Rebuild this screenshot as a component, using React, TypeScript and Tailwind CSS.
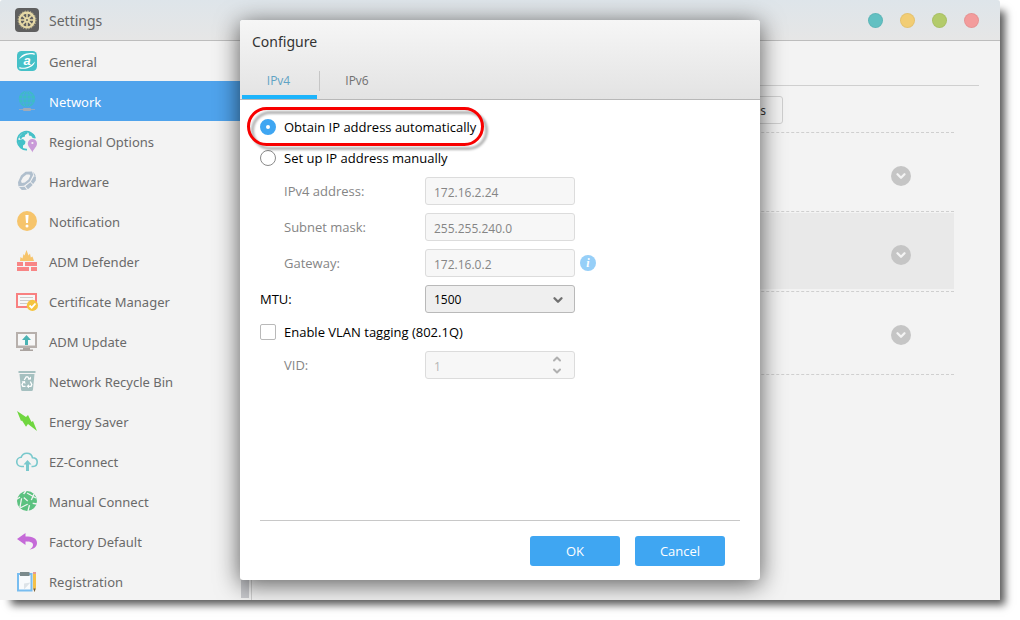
import { useState } from "react";
import type { ReactNode } from "react";
import { ChevronDown, ChevronUp } from "lucide-react";

const Icon = ({ children }: { children: ReactNode }) => (
  <svg viewBox="0 0 24 24" className="size-6 shrink-0" fill="none" aria-hidden="true">
    {children}
  </svg>
);

const SettingsIcon = () => (
  <Icon>
    <rect width="24" height="24" rx="4" fill="#5f5f5f" />
    <circle cx="12" cy="12" r="7.4" stroke="#e6d9a6" strokeWidth="2.2" />
    <circle cx="12" cy="12" r="8.9" stroke="#e6d9a6" strokeWidth="0.8" strokeDasharray="1.4 1.4" />
    <path
      d="M12 5v14M5 12h14M7.1 7.1l9.8 9.8M16.9 7.1l-9.8 9.8"
      stroke="#e6d9a6"
      strokeWidth="1.5"
    />
    <circle cx="12" cy="12" r="2.8" fill="#e6d9a6" />
    <circle cx="12" cy="12" r="1" fill="#5f5f5f" />
  </Icon>
);

const items = [
  {
    name: "General",
    icon: (
      <Icon>
        <rect x="2" y="2" width="20" height="20" rx="4.5" fill="#45c1c8" />
        <path d="M4.2 10.5C5.5 6 12 2.8 19.8 4.6L19.5 6C18 4.800 11 4.200 4.200 10.500z" fill="#fff" />
        <path d="M20 12.500C19 17.500 12 21.200 4.200 19.400L4.500 18C7 19.600 14.500 19.200 20 12.500z" fill="#fff" />
        <text
          x="12"
          y="16"
          textAnchor="middle"
          fontSize="13"
          fontWeight="bold"
          fontStyle="italic"
          fill="#fff"
          fontFamily="Liberation Sans"
        >
          a
        </text>
      </Icon>
    ),
  },
  {
    name: "Network",
    icon: (
      <Icon>
        <circle cx="12" cy="10" r="8.2" fill="#3dbcc4" />
        <g stroke="#4fa3ec" strokeWidth="0.8">
          <path d="M12 2v16M4 10h16M5.500 6h13M5.500 14h13" />
          <ellipse cx="12" cy="10" rx="4.300" ry="8.200" />
        </g>
        <path d="M4 20.500h16" stroke="#8fa9c4" />
        <rect x="8" y="19" width="8" height="3" rx="1" fill="#a2aab6" />
      </Icon>
    ),
  },
  {
    name: "Regional Options",
    icon: (
      <Icon>
        <path d="M12 20.600A9 9 0 1 1 20 9" stroke="#45c1c8" strokeWidth="1.600" />
        <path d="M4 8l3.500-4L12 2.500l.5 2-2.500 1.500 0 1.500-3 1-1 2.500z" fill="#45c1c8" />
        <path d="M2.500 10.500l2.500.5 3-1 2.500 2.500-.5 2.500-2 1.500v3.500l-4-3z" fill="#45c1c8" />
        <path d="M13.500 3l5 2 2.200 4.500-3-.5-1.500-2-2.200-.5z" fill="#45c1c8" />
        <path
          d="M17.400 23.500c-.8-3-4.600-5.500-4.600-8.900a4.600 4.600 0 0 1 9.200 0c0 3.400-3.800 5.900-4.600 8.900z"
          fill="#c99ad8"
        />
        <circle cx="17.400" cy="14" r="1.100" fill="#f3f3f3" />
      </Icon>
    ),
  },
  {
    name: "Hardware",
    icon: (
      <Icon>
        <path
          fillRule="evenodd"
          d="M10.500 2.800L17 2.600l1.200 3.200-3.200 6.400L9 16.800l-5.600.4L3 13.200l3-6.700zM11.500 5.400L8 8.200 6 12l.8 2 3-.4 3.700-3 1.800-3.800-.9-1.400z"
          fill="#b0bfcd"
        />
        <path
          d="M18.200 2.800l2.700 4-1.800 0zM19 7.300l2 .2-.2 4-2.600 3.600-2.400-2.400zM15.300 13.200l2.400 2.800-4.700 4.300-2.600-3zM9.600 17.800l2.300 3-5.100.3-2.800-3z"
          fill="#b0bfcd"
        />
      </Icon>
    ),
  },
  {
    name: "Notification",
    icon: (
      <Icon>
        <circle cx="12" cy="12" r="10" fill="#f6c46b" />
        <path d="M10.400 6h3.200l-.6 8h-2z" fill="#fff" />
        <circle cx="12" cy="17" r="1.500" fill="#fff" />
      </Icon>
    ),
  },
  {
    name: "ADM Defender",
    icon: (
      <Icon>
        <path d="M5 12l.5-4 2 1.500 1-4.500 1 1.500L11.500 1l2 5.500 1.500-2 .8 4 1.700-1L19 12z" fill="#f6c46b" />
        <path d="M2 13h6v4H2zM10 13h12v4H10zM2 18h12v4H2zM16 18h6v4h-6z" fill="#f88585" />
      </Icon>
    ),
  },
  {
    name: "Certificate Manager",
    icon: (
      <Icon>
        <rect x="2" y="5" width="19" height="13" fill="#f7f7f7" stroke="#f88080" strokeWidth="2" />
        <path d="M5 8.500h13M5 11.500h13M5 14.500h7" stroke="#ccc" />
        <circle cx="17.400" cy="16.400" r="5.600" fill="#f5c440" />
        <path d="M14.500 16.500l2.200 2.200 3.800-4.200" stroke="#fff" strokeWidth="1.800" />
      </Icon>
    ),
  },
  {
    name: "ADM Update",
    icon: (
      <Icon>
        <rect x="2" y="4" width="19" height="14" fill="#f7f7f7" stroke="#b7b0ac" strokeWidth="2" />
        <path d="M2 17.500h19" stroke="#b7b0ac" strokeWidth="2" />
        <path d="M11.500 6l4.500 5h-3v5h-3v-5H7z" fill="#4bb3b3" />
        <path d="M8 19h7v1.500H8zM5 20.500h13V22H5z" fill="#aaa39f" />
      </Icon>
    ),
  },
  {
    name: "Network Recycle Bin",
    icon: (
      <Icon>
        <path
          d="M3.500 2h17v2h-17zM4.500 5h15L18 20.500q-.2 1.500-1.500 1.500h-9Q6.200 22 6 20.500z"
          fill="#a5c0c0"
        />
        <path
          d="M9.200 11l2-3.200h1.600l1.500 2.700M15.300 12.500l1.500 3-.8 1.800h-3M10.500 17.300H7.800L7 15.500l1.400-2.600"
          stroke="#fff"
          strokeWidth="1.300"
        />
        <path d="M12.600 10.500H16V7.500zM14 15.200v4l-2.500-2zM6.500 12.500l3.500-.5.500 3z" fill="#fff" />
      </Icon>
    ),
  },
  {
    name: "Energy Saver",
    icon: (
      <Icon>
        <path d="M2 2l9 6 2-2 3.500 7 1.500-1 4 10-9-7-2 2.800L7 11.500l-1 .5z" fill="#6fd63f" />
      </Icon>
    ),
  },
  {
    name: "EZ-Connect",
    icon: (
      <Icon>
        <path
          d="M9 17.500H6.500a4.600 4.600 0 0 1-.3-9.200C7 5.500 9 4.200 11.800 4.200c3 0 5.200 1.800 5.700 4.600 3 0 4.700 2 4.700 4.300 0 2.500-1.700 4.400-4.200 4.400h-1.500"
          stroke="#78c8cc"
          strokeWidth="1.600"
        />
        <path d="M12.500 11l4 4.500H14V22h-3v-6.500H8.500z" fill="#78c8cc" />
      </Icon>
    ),
  },
  {
    name: "Manual Connect",
    icon: (
      <Icon>
        <circle cx="12" cy="12" r="10" fill="#5cc280" />
        <path
          d="M2 10l5-3 8 7 7 1M7 7l4-5M15 14l-2 8M15 14l4-9M15 14L5 19M7 7L5 18M12 4l9 5"
          stroke="#f3f3f3"
          strokeWidth="1.300"
        />
        <circle cx="7" cy="7" r="2.400" fill="#5cc280" />
        <circle cx="15" cy="13.500" r="2.800" fill="#5cc280" />
      </Icon>
    ),
  },
  {
    name: "Factory Default",
    icon: (
      <Icon>
        <path
          d="M2 10l8.500-6v3.500c7 0 11.500 1.500 11.500 6.500 0 3.500-3 6-7.500 6.500 2.500-1.300 3.700-3 3.500-5-.3-2.200-3-3-7.500-3V16z"
          fill="#c56ad8"
        />
      </Icon>
    ),
  },
  {
    name: "Registration",
    icon: (
      <Icon>
        <rect x="3" y="5" width="13.500" height="16.500" fill="#f8fafc" stroke="#78bdf0" strokeWidth="2" />
        <path d="M9 20.500v-6l6.500-1z" fill="#dde3e8" />
        <rect x="5" y="3" width="9.500" height="4" fill="#7b8a8c" />
        <path d="M18 5h3v14l-1.500 4-1.500-4z" fill="#f3c04a" />
        <path d="M18 3h3v2h-3z" fill="#e89a93" />
        <path d="M18.300 19.500h2.400l-1.200 3.500z" fill="#6b5a4a" />
      </Icon>
    ),
  },
];

const dots = [
  { name: "Help", color: "bg-[#62c0c2]" },
  { name: "Minimize", color: "bg-[#f2cd74]" },
  { name: "Maximize", color: "bg-[#b3cb6b]" },
  { name: "Close", color: "bg-[#f39c9c]" },
];

const addressFields = [
  { id: "ipv4", label: "IPv4 address:", value: "172.16.2.24" },
  { id: "subnet", label: "Subnet mask:", value: "255.255.240.0" },
  { id: "gateway", label: "Gateway:", value: "172.16.0.2" },
];

const radioClass =
  "size-4 shrink-0 appearance-none rounded-full border border-[#8a8a8a] bg-white checked:border-[6px] checked:border-[#3fa6f2]";
const fieldClass =
  "h-7 w-[150px] rounded-[3px] border border-[#dcdcdc] bg-[#f7f7f7] px-2 pt-0.5 text-xs";

const ExpandButton = () => (
  <button
    aria-label="Expand"
    className="flex size-5 items-center justify-center rounded-full bg-[#c5c5c5] text-[#f3f3f3]"
  >
    <ChevronDown className="size-3.5" strokeWidth={4} />
  </button>
);

const Sidebar = () => (
  <nav className="w-60 shrink-0">
    {items.map((item) => (
      <a
        key={item.name}
        href="#"
        className={
          item.name === "Network"
            ? "flex h-10 items-center gap-2.5 bg-[#4fa3ec] pl-[15px] text-white"
            : "flex h-10 items-center gap-2.5 pl-[15px] text-[#6a6a6a]"
        }
      >
        {item.icon}
        <span className="pt-1">{item.name}</span>
      </a>
    ))}
  </nav>
);

const Main = () => (
  <main className="min-w-0 flex-1 border-l border-[#cfcfcf] pr-[21px] pl-5">
    <div className="h-[45px] border-b border-[#cfcfcf]" />
    <div className="mr-[25px]">
      <div className="flex h-[47px] justify-end border-b border-dashed border-[#cfcfcf] pt-2.5 pr-[171px]">
        <button className="h-7 w-28 rounded-[3px] border border-[#cfcfcf] pt-0.5 pr-4 text-right text-xs text-[#333]">
          s
        </button>
      </div>
      <div className="flex h-[79px] items-center justify-end border-b border-dashed border-[#cfcfcf] pt-2 pr-[43px]">
        <ExpandButton />
      </div>
      <div className="border-b border-dashed border-[#cfcfcf] pt-px pb-0.5">
        <div className="flex h-[76px] items-center justify-end bg-[#e9e9e9] pt-2 pr-[43px]">
          <ExpandButton />
        </div>
      </div>
      <div className="flex h-[83px] items-center justify-end border-b border-dashed border-[#cfcfcf] pt-1 pr-[43px]">
        <ExpandButton />
      </div>
    </div>
  </main>
);

const ConfigureDialog = () => {
  const [tab, setTab] = useState("IPv4");
  const [mode, setMode] = useState("auto");
  const [vlan, setVlan] = useState(false);
  const manual = mode === "manual";

  return (
    <div
      role="dialog"
      aria-labelledby="dialog-title"
      className="flex w-[520px] flex-col rounded-[3px] bg-white font-['Open_Sans',sans-serif] text-[13px] text-black shadow-[0_4px_24px_rgba(0,0,0,0.65)]"
    >
      {/* Title and tabs */}
      <div className="flex h-20 flex-col justify-between rounded-t-[3px] border-b border-[#b8b8b8] bg-linear-to-b from-[#f6f6f6] to-[#e3e3e3]">
        <h2 id="dialog-title" className="pt-3 pl-3 font-['Noto_Sans',sans-serif] text-sm text-[#333]">
          Configure
        </h2>
        <div role="tablist" className="flex items-center px-0.5 text-xs text-[#707070]">
          {["IPv4", "IPv6"].map((name) => (
            <button
              key={name}
              role="tab"
              aria-selected={tab === name}
              onClick={() => setTab(name)}
              className="group flex w-[78px] flex-col aria-selected:text-[#5fa3c4]"
            >
              <span className="mb-1 flex h-5 w-full items-center justify-center border-[#c6c6c6] pr-1 group-first:border-r">
                {name}
              </span>
              <span className="h-1 w-[75px] group-aria-selected:bg-[#1db4fb]" />
            </button>
          ))}
        </div>
      </div>

      <form className="flex flex-1 flex-col px-5 pt-[11px] pb-3.5" onSubmit={(e) => e.preventDefault()}>
        <div className="relative flex h-[31px] items-center">
          <label className="flex items-center gap-2">
            <input
              type="radio"
              name="mode"
              className={radioClass}
              checked={!manual}
              onChange={() => setMode("auto")}
            />
            <span className="pt-0.5">Obtain IP address automatically</span>
          </label>
          {/* Callout around the selected option */}
          <div className="pointer-events-none absolute -top-1 -left-[13px] h-[39px] w-[237px] rounded-[22px] border-[3px] border-[#f80000] drop-shadow-[4px_4px_1px_rgba(0,0,0,0.3)]" />
        </div>
        <label className="flex h-[31px] items-center gap-2">
          <input
            type="radio"
            name="mode"
            className={radioClass}
            checked={manual}
            onChange={() => setMode("manual")}
          />
          <span className="pt-0.5">Set up IP address manually</span>
        </label>

        <div className="mt-1 flex flex-col gap-2">
          {addressFields.map((field) => (
            <div key={field.id} className="flex items-center">
              <label htmlFor={field.id} className="w-[165px] pt-0.5 pl-6 text-[#858585]">
                {field.label}
              </label>
              <input
                id={field.id}
                defaultValue={field.value}
                disabled={!manual}
                className={`${fieldClass} text-[#858585]`}
              />
              {field.id === "gateway" && (
                <button
                  type="button"
                  aria-label="Info"
                  className="ml-[5px] size-4 rounded-full bg-[#96cff8] font-['Liberation_Serif',serif] text-xs leading-4 font-bold text-white italic"
                >
                  i
                </button>
              )}
            </div>
          ))}
          <div className="flex items-center">
            <label htmlFor="mtu" className="w-[165px] pt-0.5">
              MTU:
            </label>
            <div className="relative">
              <select
                id="mtu"
                className="h-7 w-[150px] appearance-none rounded-[3px] border border-[#b9b9b9] bg-[#efefef] px-2 pt-0.5 text-xs"
              >
                <option>1500</option>
              </select>
              <ChevronDown
                className="pointer-events-none absolute top-2 right-2.5 size-3.5 text-[#707070]"
                strokeWidth={4}
              />
            </div>
          </div>
        </div>

        <label className="mt-0.5 mb-0.5 flex h-[34px] items-center gap-2">
          <input
            type="checkbox"
            checked={vlan}
            onChange={(e) => setVlan(e.target.checked)}
            className="size-4 appearance-none rounded-[2px] border border-[#b9b9b9] bg-white checked:bg-[#3fa6f2]"
          />
          <span className="pt-0.5">Enable VLAN tagging (802.1Q)</span>
        </label>
        <div className="flex items-center">
          <label htmlFor="vid" className="w-[165px] pt-0.5 pl-6 text-[#858585]">
            VID:
          </label>
          <div className="relative">
            <input
              id="vid"
              defaultValue="1"
              disabled={!vlan}
              className={`${fieldClass} text-[#b5b5b5]`}
            />
            <div className="pointer-events-none absolute inset-y-0 right-3 flex flex-col justify-between py-0.5 text-[#b0b0b0]">
              <ChevronUp className="size-3" strokeWidth={4} />
              <ChevronDown className="size-3" strokeWidth={4} />
            </div>
          </div>
        </div>

        <div className="mt-auto flex justify-end gap-[15px] border-t border-[#c8c8c8] pt-[15px] pr-[15px]">
          <button type="submit" className="h-[30px] w-[90px] rounded-[3px] bg-[#3fa6f2] pt-0.5 text-white">
            OK
          </button>
          <button type="button" className="h-[30px] w-[90px] rounded-[3px] bg-[#3fa6f2] pt-0.5 text-white">
            Cancel
          </button>
        </div>
      </form>
    </div>
  );
};

const App = () => {
  return (
    <div className="flex h-screen bg-white pr-5 pb-5 font-['Noto_Sans',sans-serif] text-[13px]">
      <div className="relative flex min-w-0 flex-1 flex-col rounded-t-[3px] bg-[#f3f3f3] shadow-[8px_8px_8px_-3px_rgba(0,0,0,0.65)]">
        <header className="flex h-[41px] shrink-0 items-center justify-between rounded-t-[3px] border-b border-[#bdbdbd] bg-linear-to-b from-[#dee5ea] to-[#e6e6e6] pr-[21px] pl-[15px]">
          <div className="flex items-center gap-2.5">
            <SettingsIcon />
            <h1 className="pt-0.5 text-sm text-[#666]">Settings</h1>
          </div>
          <div className="flex gap-[17px]">
            {dots.map((dot) => (
              <button
                key={dot.name}
                aria-label={dot.name}
                className={`size-[15px] rounded-full border border-black/5 ${dot.color}`}
              />
            ))}
          </div>
        </header>
        <div className="flex min-h-0 flex-1 overflow-hidden">
          <Sidebar />
          <div className="mr-0.5 flex w-[9px] shrink-0 flex-col pb-0.5 pl-px">
            <div className="h-full bg-[#c9cace]" />
          </div>
          <Main />
        </div>

        <div className="absolute inset-0 flex justify-center overflow-hidden py-5">
          <ConfigureDialog />
        </div>
      </div>
    </div>
  );
};

export default App;
